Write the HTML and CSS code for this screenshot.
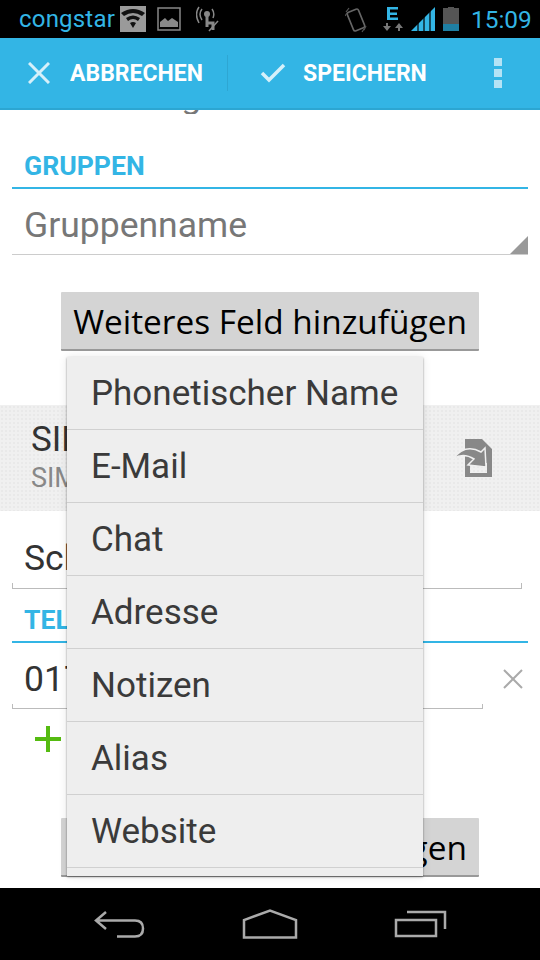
FILE: index.html
```html
<!DOCTYPE html>
<html>
<head>
  <title>Kontakt bearbeiten</title>
  <meta charset="utf-8">
  <link rel="stylesheet" href="styles.css">
</head>
<body>

  <div class="status">
    <span class="carrier">congstar</span>
    <svg class="st-wifi" width="26" height="26" viewBox="0 0 26 26">
      <rect width="26" height="26" fill="#9a9a9a"/>
      <path d="M1 7Q13 -1 25 7L22 10Q13 4 4 10Z M6 12Q13 7 20 12L18 15Q13 11 8 15Z M10 17Q13 15 16 17L13 22Z" fill="#111"/>
    </svg>
    <svg class="st-pic" width="24" height="24" viewBox="0 0 24 24">
      <rect x="1" y="1" width="22" height="22" fill="none" stroke="#888" stroke-width="1.5"/>
      <path d="M3 20V15L8 11L11 14L15 11L21 15V20Z" fill="#888"/>
    </svg>
    <svg class="st-antenna" width="23" height="26" viewBox="0 0 23 26">
      <circle cx="11" cy="8" r="3" fill="#888"/>
      <path d="M11 9V21M11 17H17V24" fill="none" stroke="#888" stroke-width="3"/>
      <path d="M6 3Q2 8 6 14M3 1Q-2 8 3 17M16 3Q19 7 17 12" fill="none" stroke="#888" stroke-width="1.5"/>
      <path d="M13 25L22 15" stroke="#888" stroke-width="1.5"/>
    </svg>
    <span class="status-gap"></span>
    <svg class="st-vibrate" width="22" height="26" viewBox="0 0 22 26">
      <rect x="5" y="3" width="12" height="20" rx="2" transform="rotate(-22 11 13)" fill="none" stroke="#666" stroke-width="1.6"/>
      <path d="M1 5L4 1M0 9L2 6M19 23L21 19M17 25L19 22" stroke="#555" stroke-width="1.2"/>
    </svg>
    <svg class="st-data" width="20" height="24" viewBox="0 0 20 24">
      <path d="M4 0H15V2.500H7V5.500H14V8H7V10.500H15V13H4Z" fill="#33b5e5"/>
      <path d="M0 19H3V16H5V19H8L4 24Z" fill="#777"/>
      <path d="M12 21H15V24H17V21H20L16 16Z" fill="#777"/>
    </svg>
    <svg class="st-signal" width="24" height="24" viewBox="0 0 24 24">
      <path d="M0 24L24 0V24Z" fill="#33b5e5"/>
      <path d="M7 24V16M13 24V10M19 24V4" stroke="#000" stroke-width="1.2"/>
    </svg>
    <svg class="st-battery" width="16" height="24" viewBox="0 0 16 24">
      <path d="M5 0H11V1H16V24H0V1H5Z" fill="#555"/>
      <rect y="17" width="16" height="7" fill="#1f7fa3"/>
    </svg>
    <span class="clock">15:09</span>
  </div>

  <div class="actionbar">
    <div class="action action-cancel">
      <svg width="22" height="22" viewBox="0 0 22 22">
        <path d="M1 1L21 21M21 1L1 21" stroke="#d6f0fa" stroke-width="3"/>
      </svg>
      <span>ABBRECHEN</span>
    </div>
    <div class="action action-save">
      <svg width="26" height="20" viewBox="0 0 26 20">
        <path d="M2 10L9 17L24 2" fill="none" stroke="#d6f0fa" stroke-width="3.500"/>
      </svg>
      <span>SPEICHERN</span>
    </div>
    <div class="overflow">
      <i></i><i></i><i></i>
    </div>
  </div>

  <div class="content">
    <div class="clipped"><span>Geburtstag</span></div>

    <h2 class="section section-groups">GRUPPEN</h2>
    <div class="field field-groups">
      <span class="hint">Gruppenname</span>
      <i class="corner"></i>
    </div>

    <div class="btn-row btn-row-first">
      <div class="btn">Weiteres Feld hinzufügen</div>
    </div>

    <div class="sim">
      <div class="sim-text">
        <div class="sim-title">SIM</div>
        <div class="sim-sub">SIM</div>
      </div>
      <svg width="40" height="38" viewBox="0 0 40 38">
        <path d="M12 0H29L39 10V38H12ZM17 24V34H34V24Z" fill="#888" fill-rule="evenodd"/>
        <path d="M0 20Q12 4 28 13L32 9L33 28L15 26L21 20Q10 13 0 20Z" fill="#888" stroke="#f0f0f0" stroke-width="1.500"/>
      </svg>
    </div>

    <div class="field field-name">
      <span class="value">Sch</span>
    </div>

    <h2 class="section section-phone">TELEFON</h2>
    <div class="phone-row">
      <div class="field field-phone">
        <span class="value">017</span>
      </div>
      <svg class="remove" width="20" height="20" viewBox="0 0 20 20">
        <path d="M1 1L19 19M19 1L1 19" stroke="#aaa" stroke-width="2"/>
      </svg>
    </div>
    <svg class="add" width="26" height="26" viewBox="0 0 26 26">
      <path d="M13 0V26M0 13H26" stroke="#55bb11" stroke-width="4"/>
    </svg>

    <div class="btn-row btn-row-second">
      <div class="btn">Weiteres Feld hinzufügen</div>
    </div>

    <ul class="menu">
      <li>Phonetischer Name</li>
      <li>E-Mail</li>
      <li>Chat</li>
      <li>Adresse</li>
      <li>Notizen</li>
      <li>Alias</li>
      <li>Website</li>
    </ul>
  </div>

  <div class="nav">
    <svg width="52" height="28" viewBox="0 0 52 28">
      <path d="M12 2L2 10.500L12 19M2 10.500H41Q49 10.500 49 18.500T41 26.500H23" fill="none" stroke="#aaa" stroke-width="2.500"/>
    </svg>
    <svg width="56" height="30" viewBox="0 0 56 30">
      <path d="M2 28.500V11L28 1.500L54 11V28.500Z" fill="none" stroke="#aaa" stroke-width="2.500"/>
    </svg>
    <svg class="nav-recent" width="54" height="28" viewBox="0 0 54 28">
      <rect x="2" y="10" width="40" height="16" fill="none" stroke="#aaa" stroke-width="2.500"/>
      <path d="M13 2H51V19" fill="none" stroke="#aaa" stroke-width="2.500"/>
    </svg>
  </div>

</body>
</html>
```

FILE: styles.css
```css
* {
  box-sizing: border-box;
}
html, body {
  height: 100%;
}
body {
  background: white;
  display: flex;
  flex-direction: column;
  font-family: Roboto, sans-serif;
  height: 960px;
  margin: 0;
  overflow: hidden;
  width: 540px;
}

/* status bar */
.status {
  align-items: center;
  background: black;
  display: flex;
  flex: none;
  height: 38px;
  padding-left: 19px;
}
.carrier {
  color: #33b5e5;
  font-size: 24px;
  letter-spacing: .2px;
  width: 101px;
}
.st-wifi {
  margin-top: -1px;
}
.st-pic {
  margin-left: 11px;
}
.st-antenna {
  margin-left: 15px;
}
.status-gap {
  flex: 1;
}
.st-vibrate {
  margin-top: 1px;
}
.st-data {
  margin-left: 16px;
  margin-top: -1px;
}
.st-signal {
  margin-left: 8px;
  margin-top: -1px;
}
.st-battery {
  margin-left: 8px;
  margin-top: -1px;
}
.clock {
  color: #33b5e5;
  font-size: 24.4px;
  margin-left: 12px;
  width: 69px;
}

/* action bar */
.actionbar {
  align-items: center;
  background: #33b5e5;
  border-bottom: 2px solid #2ca6d2;
  display: flex;
  flex: none;
  height: 72px;
  padding-left: 28px;
}
.action {
  align-items: center;
  color: white;
  display: flex;
  font-size: 23px;
  font-weight: bold;
}
.action-cancel {
  border-right: 1px solid #2ea6d3;
  gap: 20px;
  height: 36px;
  width: 200px;
}
.action-save {
  gap: 18px;
  margin-left: 32px;
}
.action-save span {
  margin-left: -1px;
}
.overflow {
  display: flex;
  flex-direction: column;
  gap: 3px;
  margin-left: 67px;
}
.overflow i {
  background: #b5e3f5;
  display: block;
  height: 8px;
  width: 8px;
}

/* scrolled content */
.content {
  flex: 1;
  overflow: hidden;
  position: relative;
}
.clipped {
  align-items: flex-end;
  color: #777;
  display: flex;
  font-size: 35.5px;
  height: 4px;
  line-height: 1;
  overflow: hidden;
  padding-left: 25px;
}
.section {
  border-bottom: 2px solid #33b5e5;
  color: #33b5e5;
  font-size: 26.6px;
  font-weight: bold;
  line-height: 42px;
  margin: 0 12px;
  padding-left: 12px;
}
.section-groups {
  margin-top: 31px;
}
.section-phone {
  margin-top: 10px;
}
.field {
  border-bottom: 1px solid #ccc;
  font-size: 35.5px;
  margin-left: 12px;
  padding-left: 12px;
  position: relative;
}
.field-groups {
  height: 66px;
  line-height: 73px;
  margin-right: 12px;
}
.hint {
  color: #777;
}
.value {
  color: #333;
}
.corner {
  border-bottom: 18px solid #999;
  border-left: 18px solid transparent;
  bottom: 0;
  position: absolute;
  right: 0;
}
.btn-row {
  display: flex;
  justify-content: center;
}
.btn-row-first {
  margin-top: 37px;
}
.btn-row-second {
  margin-top: 66px;
}
.btn {
  background: #d4d4d4;
  border-bottom: 2px solid #999;
  border-radius: 1px;
  color: black;
  font-family: "Open Sans", sans-serif;
  font-size: 33.4px;
  height: 59px;
  line-height: 58px;
  text-align: center;
  width: 418px;
}

/* sim account */
.sim {
  align-items: center;
  background-color: #f0f0f0;
  background-image: radial-gradient(#e9e9e9 1px, transparent 1px);
  background-size: 4px 4px;
  display: flex;
  height: 106px;
  justify-content: space-between;
  margin-top: 54px;
  padding: 0 47px 0 31px;
}
.sim-title {
  color: #333;
  font-size: 35px;
  line-height: 40px;
}
.sim-sub {
  color: #888;
  font-size: 27px;
  line-height: 36px;
}
.field-name {
  border-left: 1px solid #bbb;
  border-bottom-color: #bbb;
  border-right: 1px solid #bbb;
  border-image: linear-gradient(to bottom, transparent 93%, #bbb 93%) 1;
  height: 78px;
  line-height: 94px;
  margin-right: 18px;
  padding-left: 11px;
}
.phone-row {
  align-items: center;
  display: flex;
  gap: 20px;
}
.field-phone {
  border-left: 1px solid #bbb;
  border-bottom-color: #bbb;
  border-right: 1px solid #bbb;
  border-image: linear-gradient(to bottom, transparent 92%, #bbb 92%) 1;
  height: 66px;
  line-height: 72px;
  padding-left: 11px;
  width: 471px;
}
.remove {
  margin-top: 6px;
}
.add {
  display: block;
  margin: 17px 0 0 35px;
}

/* popup */
.menu {
  background: #eee;
  box-shadow: 0 1px 2px rgba(0, 0, 0, .4), 0 0 9px rgba(0, 0, 0, .1);
  color: #3a3a3a;
  font-size: 35px;
  height: 519px;
  left: 67px;
  list-style: none;
  margin: 0;
  padding: 0;
  position: absolute;
  top: 247px;
  width: 356px;
}
.menu li {
  border-bottom: 1px solid #d0d0d0;
  height: 73px;
  line-height: 74px;
  padding-left: 24px;
}

/* nav bar */
.nav {
  align-items: center;
  background: black;
  display: grid;
  flex: none;
  grid-template-columns: repeat(3, 150px);
  height: 72px;
  justify-items: center;
  padding: 0 45px;
}
.nav-recent {
  margin-left: 2px;
}
```
